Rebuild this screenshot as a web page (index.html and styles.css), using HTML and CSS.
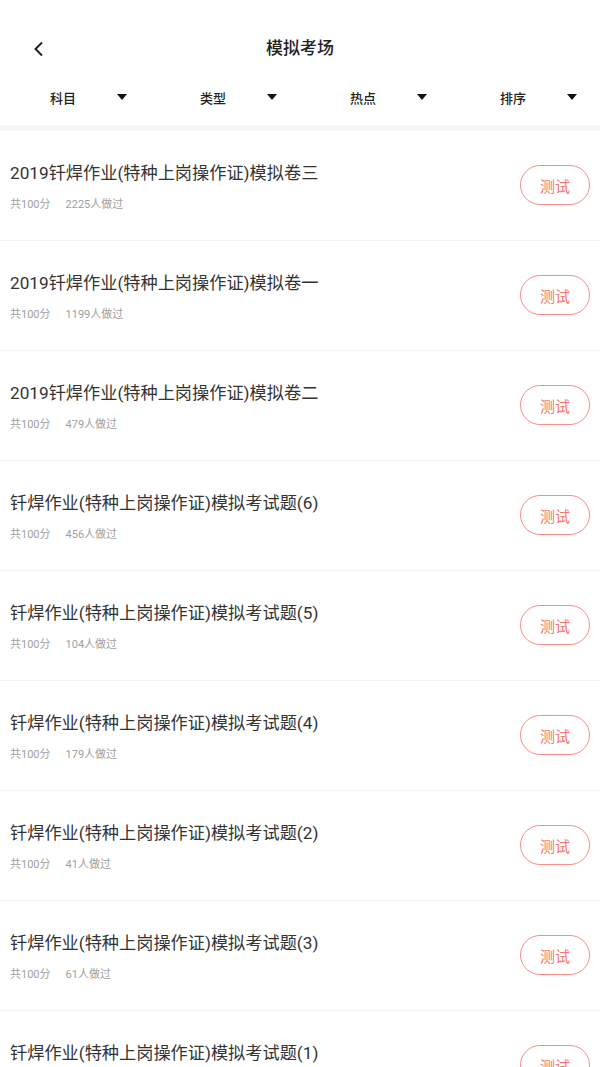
FILE: index.html
```html
<!DOCTYPE html>
<html lang="zh">
<head>
<meta charset="utf-8">
<link rel="stylesheet" href="styles.css">
</head>
<body>
<div class="page">
  <header class="topbar">
    <span class="back"><svg width="12" height="16" viewBox="0 0 12 16"><path d="M9 1.5 L2.5 8 L9 14.5" fill="none" stroke="#222" stroke-width="2"/></svg></span>
    <h1 class="title">模拟考场</h1>
  </header>
  <nav class="filters">
    <div class="filter"><span class="flabel">科目</span><span class="tri"></span></div>
    <div class="filter"><span class="flabel">类型</span><span class="tri"></span></div>
    <div class="filter"><span class="flabel">热点</span><span class="tri"></span></div>
    <div class="filter"><span class="flabel">排序</span><span class="tri"></span></div>
  </nav>
  <div class="band"></div>
  <ul class="list">
    <li class="item"><div class="info"><div class="name">2019钎焊作业(特种上岗操作证)模拟卷三</div><div class="meta"><span>共100分</span><span>2225人做过</span></div></div><button class="btn">测试</button></li>
    <li class="item"><div class="info"><div class="name">2019钎焊作业(特种上岗操作证)模拟卷一</div><div class="meta"><span>共100分</span><span>1199人做过</span></div></div><button class="btn">测试</button></li>
    <li class="item"><div class="info"><div class="name">2019钎焊作业(特种上岗操作证)模拟卷二</div><div class="meta"><span>共100分</span><span>479人做过</span></div></div><button class="btn">测试</button></li>
    <li class="item"><div class="info"><div class="name">钎焊作业(特种上岗操作证)模拟考试题(6)</div><div class="meta"><span>共100分</span><span>456人做过</span></div></div><button class="btn">测试</button></li>
    <li class="item"><div class="info"><div class="name">钎焊作业(特种上岗操作证)模拟考试题(5)</div><div class="meta"><span>共100分</span><span>104人做过</span></div></div><button class="btn">测试</button></li>
    <li class="item"><div class="info"><div class="name">钎焊作业(特种上岗操作证)模拟考试题(4)</div><div class="meta"><span>共100分</span><span>179人做过</span></div></div><button class="btn">测试</button></li>
    <li class="item"><div class="info"><div class="name">钎焊作业(特种上岗操作证)模拟考试题(2)</div><div class="meta"><span>共100分</span><span>41人做过</span></div></div><button class="btn">测试</button></li>
    <li class="item"><div class="info"><div class="name">钎焊作业(特种上岗操作证)模拟考试题(3)</div><div class="meta"><span>共100分</span><span>61人做过</span></div></div><button class="btn">测试</button></li>
    <li class="item"><div class="info"><div class="name">钎焊作业(特种上岗操作证)模拟考试题(1)</div><div class="meta"><span>共100分</span><span>33人做过</span></div></div><button class="btn">测试</button></li>
  </ul>
</div>
</body>
</html>
```
FILE: styles.css
```css
* { box-sizing: border-box; }
html, body { margin: 0; padding: 0; background: #fff; }
body { font-family: Roboto, "Noto Sans CJK SC", sans-serif; color: #333; overflow: hidden; height: 1067px; }
.page { width: 600px; height: 1067px; overflow: hidden; }
.topbar { position: relative; height: 73px; display: flex; align-items: center; justify-content: center; padding-top: 22px; }
.back { position: absolute; left: 33px; top: 41px; display: flex; }
.title { margin: 0; font-size: 17px; font-weight: 500; color: #222; line-height: 20px; }
.filters { display: flex; height: 52px; padding-bottom: 4px; }
.filter { flex: 1; display: flex; align-items: center; padding-left: 50px; }
.flabel { font-size: 13px; color: #222; width: 67px; font-weight: 500; }
.tri { width: 0; height: 0; border-left: 5px solid transparent; border-right: 5px solid transparent; border-top: 6px solid #111; }
.band { height: 6px; background: #f6f6f6; }
.list { list-style: none; margin: 0; padding: 0; }
.item { height: 110px; display: flex; align-items: flex-start; justify-content: space-between; padding: 31px 10px 0 10px; border-bottom: 1px solid #f3f3f3; }
.name { font-size: 17.2px; line-height: 22px; color: #333; }
.meta { margin-top: 14px; font-size: 11px; color: #a0a0a0; display: flex; gap: 15px; line-height: 14px; }
.btn { margin-top: 3px; width: 70px; height: 40px; border: 1px solid #fa8b87; border-radius: 20px; background: #fff; color: #f7746f; font-size: 15px; font-family: inherit; padding: 0; }
```
